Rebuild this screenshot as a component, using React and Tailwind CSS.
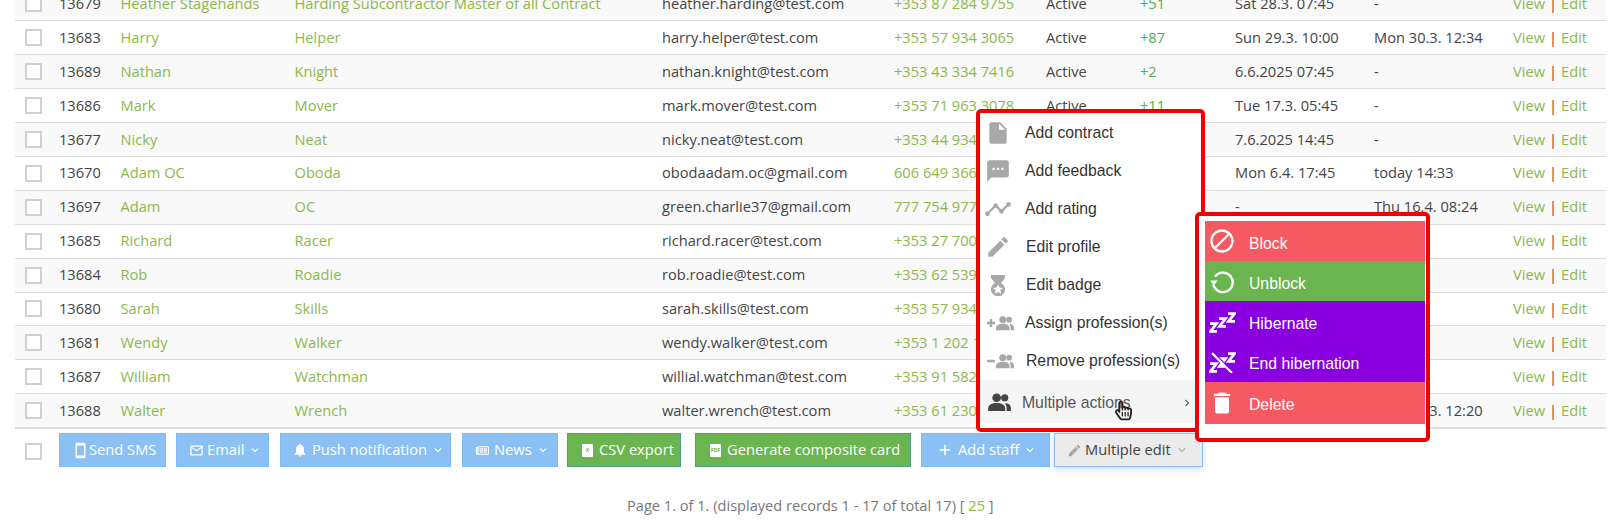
import { FaRegHandPointer, FaRegNewspaper } from 'react-icons/fa';
import {
  MdInsertDriveFile,
  MdSms,
  MdTimeline,
  MdEdit,
  MdBlock,
  MdDelete,
  MdNotifications,
  MdMailOutline,
  MdSmartphone,
  MdKeyboardArrowDown,
  MdKeyboardArrowRight,
  MdAdd,
} from 'react-icons/md';

const rows = [
  ['13679', 'Heather Stagehands', 'Harding Subcontractor Master of all Contract', 'heather.harding@test.com', '+353 87 284 9755', 'Active', '+51', 'Sat 28.3. 07:45', '-'],
  ['13683', 'Harry', 'Helper', 'harry.helper@test.com', '+353 57 934 3065', 'Active', '+87', 'Sun 29.3. 10:00', 'Mon 30.3. 12:34'],
  ['13689', 'Nathan', 'Knight', 'nathan.knight@test.com', '+353 43 334 7416', 'Active', '+2', '6.6.2025 07:45', '-'],
  ['13686', 'Mark', 'Mover', 'mark.mover@test.com', '+353 71 963 3078', 'Active', '+11', 'Tue 17.3. 05:45', '-'],
  ['13677', 'Nicky', 'Neat', 'nicky.neat@test.com', '+353 44 934 1200', 'Active', '+4', '7.6.2025 14:45', '-'],
  ['13670', 'Adam OC', 'Oboda', 'obodaadam.oc@gmail.com', '606 649 366', 'Active', '+3', 'Mon 6.4. 17:45', 'today 14:33'],
  ['13697', 'Adam', 'OC', 'green.charlie37@gmail.com', '777 754 977', 'Active', '+1', '-', 'Thu 16.4. 08:24'],
  ['13685', 'Richard', 'Racer', 'richard.racer@test.com', '+353 27 700 1234', 'Active', '+5', '-', '-'],
  ['13684', 'Rob', 'Roadie', 'rob.roadie@test.com', '+353 62 539 1234', 'Active', '+6', '-', '-'],
  ['13680', 'Sarah', 'Skills', 'sarah.skills@test.com', '+353 57 934 1234', 'Active', '+7', '-', '-'],
  ['13681', 'Wendy', 'Walker', 'wendy.walker@test.com', '+353 1 202 1234', 'Active', '+8', '-', '-'],
  ['13687', 'William', 'Watchman', 'willial.watchman@test.com', '+353 91 582 1234', 'Active', '+9', '-', '-'],
  ['13688', 'Walter', 'Wrench', 'walter.wrench@test.com', '+353 61 230 1234', 'Active', '+10', '-', 'Mon 30.3. 12:20'],
];

function Checkbox() {
  return <span className="block w-[17px] h-[17px] bg-white border-2 border-[#d0d0d0]" />;
}

function BadgeIcon() {
  return (
    <svg viewBox="0 0 24 24" className="w-[24px] h-[24px]" fill="#a8a8a8">
      <path d="M5 2h14v3l-4 5a7 7 0 1 1-6 0L5 5z" />
      <path d="M12 11.5l1.5 3.1 3.4.4-2.5 2.3.7 3.4-3.1-1.7-3.1 1.7.7-3.4L7.1 15l3.4-.4z" fill="#fff" />
    </svg>
  );
}

function UnblockIcon() {
  return (
    <svg viewBox="0 0 24 24" className="w-[26px] h-[26px]" fill="none" stroke="#fff" strokeWidth="2.2">
      <path d="M5.5 8A9 9 0 1 1 4 15" />
      <path d="M1 11.5h7l-3.5 4.500z" fill="#fff" stroke="none" />
    </svg>
  );
}

function ZzzIcon({ crossed }) {
  return (
    <svg viewBox="0 0 27 19" className="w-[27px] h-[21px] mt-[2px]" preserveAspectRatio="none" fill="none" stroke="#fff" strokeWidth="2.6">
      <path d="M1 10.5h6.5L1.5 17.5H8M10 6h6.5L10.5 13H17M19 1.5h6.5L19.5 8.500H26" />
      {crossed && <path d="M7 3l18 17" stroke="#8a00e0" strokeWidth="2" />}
      {crossed && <path d="M3 1l20 18" strokeWidth="2" />}
    </svg>
  );
}

function PeopleIcon({ className, fill }) {
  return (
    <svg viewBox="0 0 24 19" className={className} fill={fill}>
      <circle cx="9" cy="5" r="4.6" />
      <path d="M0 19v-3c0-3.500 4.500-5.500 9-5.500s9 2 9 5.500v3z" />
      <circle cx="17.500" cy="5" r="3.800" />
      <path d="M17.500 10.600c3.500.2 6.500 2 6.500 5v3.400h-4.500v-3.400c0-1.900-.8-3.600-2-5z" />
    </svg>
  );
}

function PeopleSign({ plus }) {
  return (
    <span className="flex items-center ml-[4px]">
      <svg viewBox="0 0 8 8" className="w-[8px] h-[8px] mr-[1px]" stroke="#a8a8a8" strokeWidth="2.4">
        <path d="M0 4h8" />
        {plus && <path d="M4 0v8" />}
      </svg>
      <PeopleIcon className="w-[18px] h-[16px]" fill="#a8a8a8" />
    </span>
  );
}

function FileBadge({ label }) {
  return (
    <span className="flex items-center justify-center w-[11px] h-[13px] bg-white rounded-[1px] text-[5px] leading-none font-bold text-[#6ab550]">
      {label}
    </span>
  );
}

function ToolButton({ className, icon, label, caret, caretClass }) {
  return (
    <button className={`h-[34px] flex items-center border whitespace-nowrap text-[14.7px] ${className}`}>
      {icon}
      <span className="pb-[3px]">{label}</span>
      {caret && <MdKeyboardArrowDown className={`w-[14px] h-[14px] ml-[4px] ${caretClass || ''}`} />}
    </button>
  );
}

function MenuRow({ icon, label, labelClass }) {
  return (
    <div className="h-[38px] flex items-center text-[#333] text-[15.75px]">
      <span className="w-[36px] mr-[9px] flex justify-center">{icon}</span>
      <span className={labelClass}>{label}</span>
    </div>
  );
}

function ActionRow({ className, icon, label, labelClass }) {
  return (
    <div className={`flex items-center text-white text-[15.75px] ${className}`}>
      <span className="w-[34px] mr-[10px] flex justify-center">{icon}</span>
      <span className={labelClass || 'pt-[5px]'}>{label}</span>
    </div>
  );
}

export default function App() {
  return (
    <div className="relative h-[522px] overflow-hidden bg-white font-['Open_Sans',sans-serif] text-[14.65px] text-[#444]">
      <div className="-mt-[13px] ml-[15px] mr-[6px]">
        <table className="w-full table-fixed border-collapse">
          <colgroup>
            <col className="w-[44px]" />
            <col className="w-[61.5px]" />
            <col className="w-[174px]" />
            <col className="w-[367.5px]" />
            <col className="w-[232px]" />
            <col className="w-[152px]" />
            <col className="w-[94px]" />
            <col className="w-[95px]" />
            <col className="w-[139px]" />
            <col className="w-[139px]" />
            <col />
          </colgroup>
          <tbody>
            {rows.map((r, i) => (
              <tr key={r[0]} className={`h-[33.9px] border-b border-[#ddd] ${i % 2 === 0 ? 'bg-[#f9f9f9]' : 'bg-white'}`}>
                <td className="pl-[10px]"><Checkbox /></td>
                <td>{r[0]}</td>
                <td className="text-[#8cb84a] whitespace-nowrap">{r[1]}</td>
                <td className="text-[#8cb84a] whitespace-nowrap">{r[2]}</td>
                <td>{r[3]}</td>
                <td className="text-[#8cb84a]">{r[4]}</td>
                <td>{r[5]}</td>
                <td className="text-[#4caf50]">{r[6]}</td>
                <td>{r[7]}</td>
                <td>{r[8]}</td>
                <td className="whitespace-nowrap">
                  <span className="text-[#8cb84a]">View</span>
                  <span className="text-[#a33] mx-[4px]">|</span>
                  <span className="text-[#8cb84a]">Edit</span>
                </td>
              </tr>
            ))}
          </tbody>
        </table>

        {/* bottom toolbar */}
        <div className="border-t-2 border-[#ddd] -mt-px pt-[4px] pl-[10px] flex items-center text-white">
          <span className="mr-[17px] mt-[3px]"><Checkbox /></span>
          <ToolButton className="bg-[#8ac0f4] border-[#7db8f2] w-[107px] pl-[12px] mr-[10px]" icon={<MdSmartphone className="w-[17px] h-[19px]" />} label="Send SMS" />
          <ToolButton className="bg-[#8ac0f4] border-[#7db8f2] w-[93px] pl-[12px] mr-[11px]" icon={<MdMailOutline className="w-[15px] h-[15px] mr-[3px]" />} label="Email" caret />
          <ToolButton className="bg-[#8ac0f4] border-[#7db8f2] w-[171px] pl-[11px] mr-[11px]" icon={<MdNotifications className="w-[16px] h-[16px] mr-[4px]" />} label="Push notification" caret />
          <ToolButton className="bg-[#8ac0f4] border-[#7db8f2] w-[96px] pl-[13px] mr-[9px]" icon={<FaRegNewspaper className="w-[13px] h-[13px] mr-[5px]" />} label="News" caret />
          <ToolButton className="bg-[#6ab550] border-[#4d9e86] w-[114px] pl-[14px] mr-[14px]" icon={<span className="mr-[6px]"><FileBadge label="X" /></span>} label="CSV export" />
          <ToolButton className="bg-[#6ab550] border-[#4d9e86] w-[216px] pl-[14px] mr-[10px]" icon={<span className="mr-[6px]"><FileBadge label="PDF" /></span>} label="Generate composite card" />
          <ToolButton className="bg-[#8ac0f4] border-[#7db8f2] w-[129px] pl-[14px] mr-[4px]" icon={<MdAdd className="w-[18px] h-[18px] mr-[4px]" />} label="Add staff" caret />
          <ToolButton className="bg-[#ebebeb] border-[#8ac0f4] text-[#444] w-[149px] pl-[12px] shadow-[0_2px_6px_rgba(138,192,244,0.5)]" icon={<MdEdit className="w-[15px] h-[15px] mr-[3px] text-[#a8a8a8]" />} label="Multiple edit" caret caretClass="text-[#aaa]" />
        </div>

        <p className="mt-[28px] pl-[612px] text-[#777] text-[14.6px]">
          Page 1. of 1. (displayed records 1 - 17 of total 17) [ <span className="text-[#8cb84a]">25</span> ]
        </p>
      </div>

      {/* red annotated dropdown */}
      <div className="absolute left-[976px] top-[109px] w-[229px] h-[323px] border-4 border-[#f00000] rounded-[5px] bg-white font-['Liberation_Sans',sans-serif] overflow-hidden">
        <div className="pt-[1px]">
          <MenuRow icon={<MdInsertDriveFile className="w-[26px] h-[26px] text-[#a8a8a8]" />} label="Add contract" />
          <MenuRow icon={<MdSms className="w-[26px] h-[26px] text-[#a8a8a8]" />} label="Add feedback" />
          <MenuRow icon={<MdTimeline className="w-[28px] h-[28px] text-[#a8a8a8]" />} label="Add rating" />
          <MenuRow icon={<MdEdit className="w-[26px] h-[26px] text-[#a8a8a8]" />} label="Edit profile" labelClass="ml-px" />
          <MenuRow icon={<BadgeIcon />} label="Edit badge" labelClass="ml-px" />
          <MenuRow icon={<PeopleSign plus />} label="Assign profession(s)" />
          <MenuRow icon={<PeopleSign />} label="Remove profession(s)" labelClass="ml-px" />
        </div>
        <div className="relative h-[43px] bg-[#f5f5f5] flex items-center text-[#555] text-[15.75px]">
          <PeopleIcon className="w-[23px] h-[18px] ml-[8px] mr-[3px]" fill="#444" />
          <span className="ml-[8px] pt-[3px]">Multiple actions</span>
          <MdKeyboardArrowRight className="absolute right-[7px] top-[16px] w-[14px] h-[14px]" />
          <FaRegHandPointer className="absolute left-[135px] top-[19px] w-[17px] h-[23px] text-[#222]" />
        </div>
      </div>

      {/* red annotated submenu */}
      <div className="absolute left-[1195px] top-[212px] w-[235px] h-[230px] border-4 border-[#f00000] rounded-[5px] bg-white font-['Liberation_Sans',sans-serif] pt-[5px] pl-[6px] pr-[1px]">
        <ActionRow className="h-[40px] bg-[#f55a62]" icon={<MdBlock className="w-[28px] h-[28px]" />} label="Block" />
        <ActionRow className="h-[40px] bg-[#6ab550]" icon={<UnblockIcon />} label="Unblock" />
        <ActionRow className="h-[40px] bg-[#8a00e0]" icon={<ZzzIcon />} label="Hibernate" />
        <ActionRow className="h-[41px] bg-[#8a00e0]" icon={<ZzzIcon crossed />} label="End hibernation" />
        <ActionRow className="h-[42px] bg-[#f55a62]" icon={<MdDelete className="w-[28px] h-[28px]" />} label="Delete" labelClass="pt-[3px]" />
      </div>
    </div>
  );
}
